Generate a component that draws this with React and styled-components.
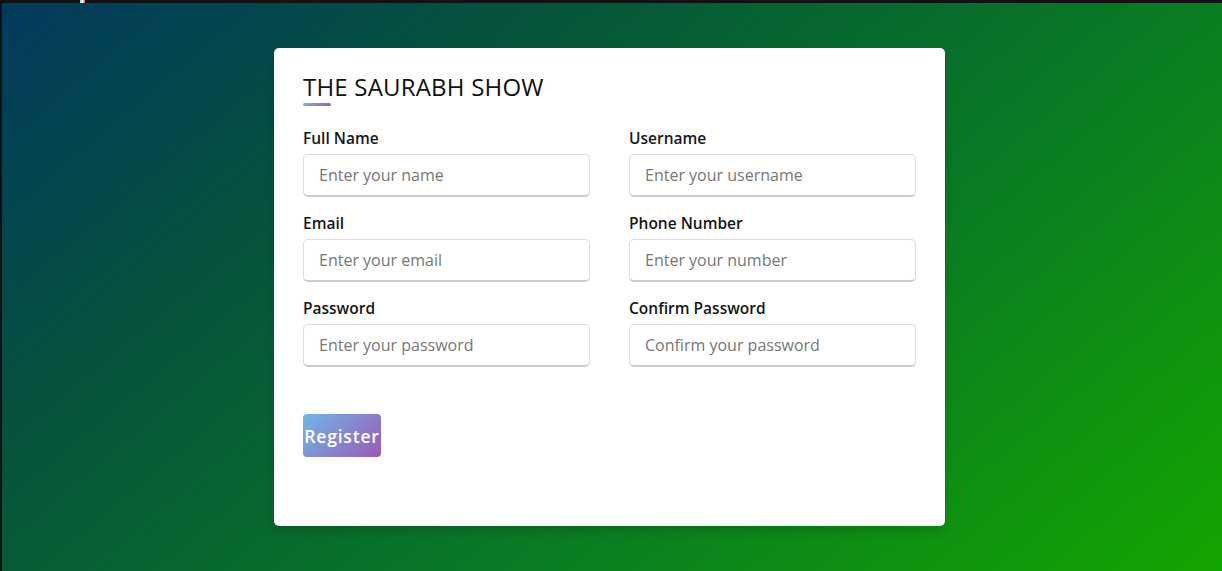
import React from "react";
import styled, { createGlobalStyle } from "styled-components";

const Global = createGlobalStyle`
  html, body { margin: 0; padding: 0; background: #111214; }
  * { box-sizing: border-box; }
  body { font-family: "Open Sans", "Noto Sans", sans-serif; }
`;

const Page = styled.div`
  height: 571px;
  display: flex;
  flex-direction: column;
  background: #111214;
`;

const TopStrip = styled.div`
  height: 3px;
  display: flex;
  padding-left: 80px;
  .mark {
    width: 5px;
    height: 3px;
    background: linear-gradient(90deg, #9ec4ff, #ffffff 50%, #d44 100%);
  }
`;

const Stage = styled.div`
  flex: 1;
  margin-left: 2px;
  background: linear-gradient(140deg, #023a5e 0%, #05533c 28%, #0a7a24 62%, #12a600 100%);
  display: flex;
  justify-content: center;
  align-items: flex-start;
  padding-top: 45px;
  padding-right: 5px;
`;

const Card = styled.div`
  width: 671px;
  height: 478px;
  background: #fff;
  border-radius: 5px;
  box-shadow: 0 5px 10px rgba(0, 0, 0, 0.15);
  padding: 20px 29px 25px;
`;

const Title = styled.div`
  position: relative;
  font-size: 24px;
  font-weight: 500;
  line-height: 38px;
  color: #111;
  letter-spacing: 0.2px;
  &::before {
    content: "";
    position: absolute;
    left: 0;
    bottom: 0;
    height: 3px;
    width: 28px;
    border-radius: 2px;
    background: linear-gradient(135deg, #71b7e6, #9b59b6);
  }
`;

const Grid = styled.div`
  display: flex;
  flex-wrap: wrap;
  justify-content: space-between;
  margin-top: 21px;
`;

const Field = styled.div`
  width: 287px;
  margin-bottom: 15px;
  display: flex;
  flex-direction: column;
`;

const Label = styled.span`
  font-size: 15.5px;
  font-weight: 600;
  line-height: 23px;
  color: #161616;
  margin-bottom: 4px;
`;

const Input = styled.input`
  height: 43px;
  width: 100%;
  border: 1px solid #ddd;
  border-bottom: 2px solid #ccc;
  border-radius: 5px;
  padding-left: 15px;
  font-size: 16px;
  font-family: inherit;
  outline: none;
  &::placeholder { color: #777; }
`;

const Button = styled.button`
  margin-top: 32px;
  height: 43px;
  width: 78px;
  padding: 0;
  border: none;
  border-radius: 4px;
  color: #fff;
  font-family: inherit;
  font-size: 17.5px;
  font-weight: 600;
  letter-spacing: 0.8px;
  background: linear-gradient(135deg, #71b7e6, #9b59b6);
`;

const fields = [
  ["Full Name", "Enter your name"],
  ["Username", "Enter your username"],
  ["Email", "Enter your email"],
  ["Phone Number", "Enter your number"],
  ["Password", "Enter your password"],
  ["Confirm Password", "Confirm your password"],
];

export default function App() {
  return (
    <>
      <Global />
      <Page>
        <TopStrip><div className="mark" /></TopStrip>
        <Stage>
          <Card>
            <Title>THE SAURABH SHOW</Title>
            <Grid>
              {fields.map(([l, p]) => (
                <Field key={l}>
                  <Label>{l}</Label>
                  <Input placeholder={p} />
                </Field>
              ))}
            </Grid>
            <Button>Register</Button>
          </Card>
        </Stage>
      </Page>
    </>
  );
}
